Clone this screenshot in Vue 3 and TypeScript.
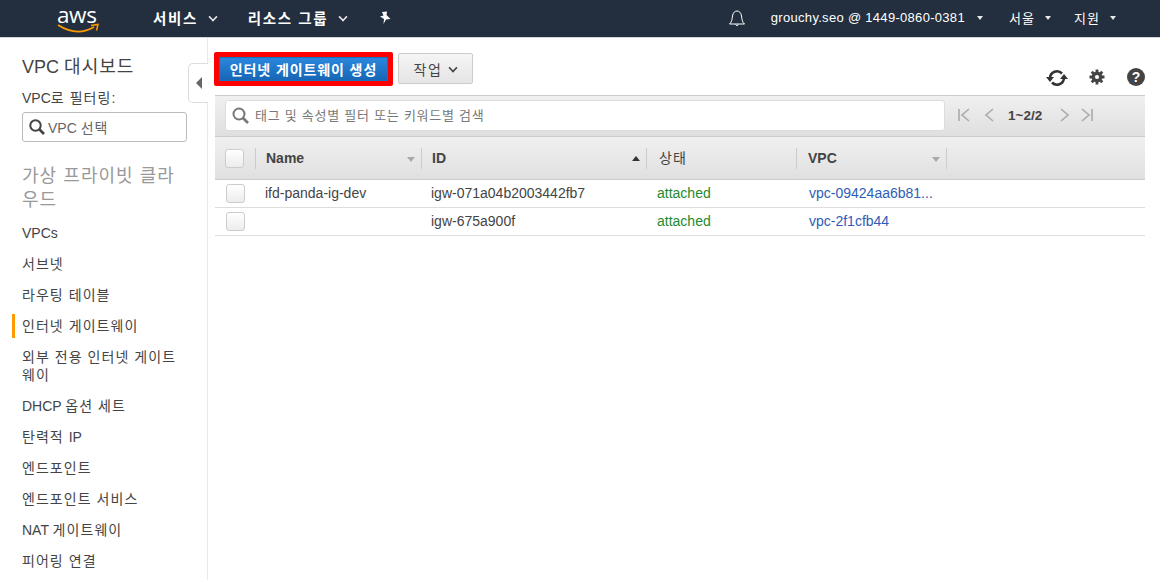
<script setup lang="ts">
const parts = (s: string): { t: string; ko: boolean }[] =>
  s.split(/([가-힣][가-힣 ]*)/).filter(Boolean).map(t => ({ t, ko: /[가-힣]/.test(t) }));
const side: string[] = ['VPCs','서브넷','라우팅 테이블','인터넷 게이트웨이','외부 전용 인터넷 게이트\n웨이','DHCP 옵션 세트','탄력적 IP','엔드포인트','엔드포인트 서비스','NAT 게이트웨이','피어링 연결'];
const rows = [
 {n:'ifd-panda-ig-dev',id:'igw-071a04b2003442fb7',vpc:'vpc-09424aa6b81...'},
 {n:'',id:'igw-675a900f',vpc:'vpc-2f1cfb44'}
];
</script>
<template>
<div class="page">
  <header class="top">
    <div class="logo">
      <span class="awst">aws</span>
      <svg class="swoosh" width="44" height="12" viewBox="0 0 44 12">
        <path d="M1 2 Q20 14 37 4" fill="none" stroke="#f90" stroke-width="1.8"/>
        <path d="M34 2.5 L41 1.5 L39.5 7.5" fill="none" stroke="#f90" stroke-width="1.5"/>
      </svg>
    </div>
    <span class="nav n1">서비스</span><i class="chev big"></i>
    <span class="nav n2">리소스 그룹</span><i class="chev big"></i>
    <svg class="pin" width="14" height="14" viewBox="0 0 14 14"><path d="M4 1 L9 0.5 L8.5 4 L12.5 8 L8 8.5 L5.5 13 L6 8 L2 5.5 L5.5 4.5Z" fill="#fff"/></svg>
    <span class="grow"></span>
    <svg class="bell" width="18" height="18" viewBox="0 0 18 18"><path d="M1.5 15 C4 13 4 10 4.5 7 C5 3.5 7 2 9 2 C11 2 13 3.5 13.5 7 C14 10 14 13 16.5 15Z M7.5 15.5 Q9 18 10.5 15.5" fill="none" stroke="#fff" stroke-width="1"/></svg>
    <span class="r r1">grouchy.seo @ 1449-0860-0381</span><i class="tri"></i>
    <span class="r r2 ko">서울</span><i class="tri"></i>
    <span class="r r3 ko">지원</span><i class="tri"></i>
  </header>
  <div class="body">
    <aside class="side">
      <h2>VPC <span class="ko">대시보드</span></h2>
      <div class="flabel">VPC<span class="ko">로 필터링</span>:</div>
      <div class="vsel">
        <svg width="18" height="18" viewBox="0 0 18 18"><circle cx="7.5" cy="7.5" r="5.2" fill="none" stroke="#444" stroke-width="2"/><path d="M11.5 11.5 L16 16" stroke="#444" stroke-width="2.6"/></svg>
        <span>VPC <span class="ko">선택</span></span>
      </div>
      <h3 class="ko">가상 프라이빗 클라<br>우드</h3>
      <ul>
        <li v-for="(s,i) in side" :key="s" :class="{on:i===3}"><span v-for="(p,j) in parts(s)" :key="j" :class="{ko:p.ko}">{{ p.t }}</span></li>
      </ul>
    </aside>
    <main class="main">
      <div class="collapse"><i></i></div>
      <div class="toolbar">
        <div class="redbox"><button class="primary ko">인터넷 게이트웨이 생성</button></div>
        <button class="act"><span class="ko">작업</span><i class="chev dark"></i></button>
        <span class="grow"></span>
        <svg class="ti" width="22" height="18" viewBox="0 0 22 18"><path d="M4 9 A7 7 0 0 1 16 4.5" fill="none" stroke="#333" stroke-width="2.6"/><path d="M18 9 A7 7 0 0 1 6 13.5" fill="none" stroke="#333" stroke-width="2.6"/><path d="M0 8 L8 8 L4 13Z M14 10 L22 10 L18 5Z" fill="#333"/></svg>
        <svg class="ti t2" width="16" height="16" viewBox="0 0 16 16"><path d="M8 0.5V15.5M0.5 8H15.5M2.7 2.7L13.3 13.3M13.3 2.7L2.7 13.3" stroke="#444" stroke-width="2.8"/><circle cx="8" cy="8" r="5.4" fill="#444"/><circle cx="8" cy="8" r="2.1" fill="#fff"/></svg>
        <span class="help">?</span>
      </div>
      <div class="filterbar">
        <div class="search">
          <svg width="20" height="20" viewBox="0 0 20 20"><circle cx="8" cy="8" r="5.5" fill="none" stroke="#777" stroke-width="2"/><path d="M12 12 L17 17" stroke="#777" stroke-width="2.6"/></svg>
          <span class="ph">태그 및 속성별 필터 또는 키워드별 검색</span>
        </div>
        <div class="pager">
          <svg width="12" height="14" viewBox="0 0 12 14"><path d="M1 1V13M11 1L4 7L11 13" fill="none" stroke="#aaa" stroke-width="1.6"/></svg>
          <svg class="p2" width="10" height="14" viewBox="0 0 10 14"><path d="M9 1L2 7L9 13" fill="none" stroke="#aaa" stroke-width="1.6"/></svg>
          <b>1~2/2</b>
          <svg width="10" height="14" viewBox="0 0 10 14"><path d="M1 1L8 7L1 13" fill="none" stroke="#aaa" stroke-width="1.6"/></svg>
          <svg class="p3" width="12" height="14" viewBox="0 0 12 14"><path d="M11 1V13M1 1L8 7L1 13" fill="none" stroke="#aaa" stroke-width="1.6"/></svg>
        </div>
      </div>
      <div class="grid thead">
        <div class="c0"><span class="cb"></span></div>
        <div class="th c1">Name<i class="sort"></i></div>
        <div class="th c2">ID<i class="sort up"></i></div>
        <div class="th c3 kr ko">상태</div>
        <div class="th c4">VPC<i class="sort"></i></div>
      </div>
      <div v-for="r in rows" :key="r.id" class="grid row">
        <div class="c0"><span class="cb"></span></div>
        <div class="td c1">{{ r.n }}</div>
        <div class="td c2">{{ r.id }}</div>
        <div class="td c3 green">attached</div>
        <div class="td c4 blue">{{ r.vpc }}</div>
      </div>
    </main>
  </div>
</div>
</template>
<style>
html,body{margin:0;padding:0;overflow:hidden;background:#fff}
</style>
<style scoped>
.page{width:1160px;height:580px;overflow:hidden;font-family:"Liberation Sans","Noto Sans CJK KR",sans-serif;color:#444;font-size:14px}
.ko{letter-spacing:1.05px}
.top{height:35px;padding-bottom:2px;background:#232f3e;border-bottom:1px solid #d5d5d5;display:flex;align-items:center;color:#fff;box-sizing:content-box}
.logo{margin-left:57px;width:44px;height:30px;position:relative;flex:none}
.awst{position:absolute;left:0;top:-3px;font:500 22.5px/30px "Open Sans",sans-serif;color:#fff;letter-spacing:-.4px}
.swoosh{position:absolute;left:0;top:20px}
.nav{font-size:14.5px;font-weight:700;letter-spacing:1.6px}
.n1{margin-left:52px}
.n2{margin-left:31px}
.chev{display:inline-block;width:6px;height:6px;border-right:2px solid #e8e8e8;border-bottom:2px solid #e8e8e8;transform:rotate(45deg) scale(.8)}
.chev.big{margin:-2px 0 0 11px}
.pin{margin-left:31px}
.grow{flex:1}
.bell{margin-right:25px}
.r{font-size:13px}
.r1{letter-spacing:.3px}
.r2{margin-left:26px}
.r3{margin-left:23px}
.tri{width:0;height:0;border-left:3.5px solid transparent;border-right:3.5px solid transparent;border-top:4px solid #e8e8e8;margin-left:10px}
.r1+.tri{margin-left:12px}
.tri:last-child{margin-right:44px}
.body{display:flex;height:542px}
.side{flex:none;border-right:1px solid #eaeaea;box-sizing:content-box;padding-left:22px;width:185px}
h2{margin:17px 0 0;font-weight:400;font-size:18px;line-height:24px;color:#444}
.flabel{margin-top:10px;font-size:14px;line-height:18px;color:#444}
.vsel{margin-top:5px;width:163px;height:28px;border:1px solid #bbb;border-radius:3px;display:flex;align-items:center;color:#666;font-size:14px}
.vsel svg{margin-left:5px;margin-right:2px;flex:none}
h3{margin:22px 0 0;font-weight:400;font-size:18px;line-height:24px;color:#999;width:175px;letter-spacing:1.1px}
ul{list-style:none;margin:5px 0 0 -10px;padding:0}
li{white-space:pre-line;padding:6.5px 0 6.5px 10px;line-height:18px;font-size:14px;color:#444;width:175px;position:relative}
li.on::before{content:"";position:absolute;left:0;top:4px;bottom:3px;width:3px;background:#f90}
.main{flex:1;position:relative;padding:0 15px 0 7px;min-width:0}
.collapse{position:absolute;left:-20px;top:25px;width:19px;height:38px;border:1px solid #ddd;border-right:0;border-radius:5px 0 0 5px;background:#fff;display:flex;align-items:center;justify-content:center}
.collapse i{border-top:6px solid transparent;border-bottom:6px solid transparent;border-right:6px solid #666}
.toolbar{display:flex;height:57px;align-items:flex-start;padding-top:14px;box-sizing:border-box}
.redbox{border:5px solid #f00;border-radius:2px;margin-left:-1px;height:24px}
button{font-family:inherit;font-size:14px;cursor:pointer}
.primary{height:24px;width:169px;padding:0;border:1px solid #1a6fc0;background:linear-gradient(#2a87de,#1766b5);color:#fff;font-weight:700;display:block;letter-spacing:.9px}
.act{margin-left:5px;margin-top:1px;width:75px;height:31px;border:1px solid #ccc;border-radius:2px;background:linear-gradient(#f5f5f5,#e5e5e5);color:#444;padding:0}
.act .ko{letter-spacing:1.6px}
.chev.dark{border-color:#444;margin-left:7px;margin-bottom:3px;width:6px;height:6px}
.ti{margin-top:17px}
.t2{margin-left:21px;margin-top:17px}
.help{margin-left:22px;margin-top:16px;width:18px;height:18px;border-radius:50%;background:#444;color:#fff;font-size:14px;font-weight:700;text-align:center;line-height:18px}
.filterbar{height:42px;background:linear-gradient(#f0f0f0,#dfdfdf);border-top:1px solid #ccc;border-bottom:1px solid #ccc;box-sizing:border-box;display:flex;align-items:flex-start;padding:4px 0 0 10px}
.search{width:720px;height:31px;box-sizing:border-box;background:#fff;border:1px solid #ddd;border-radius:3px;display:flex;align-items:center;color:#777;font-size:13px}
.search svg{margin:1px 4px 0 5px}
.ph{letter-spacing:.75px;padding-bottom:2px}
.pager{display:flex;align-items:center;margin-left:13px;height:30px;color:#444}
.pager .p2{margin-left:14px}
.pager .p3{margin-left:11px}
.pager b{font-size:13.5px;margin:0 18px 0 14px;font-weight:700}
.grid{display:grid;grid-template-columns:40px 166px 225px 150px 151px;box-sizing:border-box}
.thead{height:43px;background:linear-gradient(#f0f0f0,#e0e0e0);border-bottom:1px solid #ccc;align-items:center}
.c0{padding-left:11px;display:flex;align-items:center}
.thead .c0{padding-left:10px}
.cb{width:17px;height:17px;border:1px solid #ccc;border-radius:3px;background:linear-gradient(#fff,#ececec);display:block}
.th{height:21px;line-height:21px;font-weight:700;font-size:14px;color:#444;border-left:1px solid #ccc;padding-left:10px;position:relative;box-sizing:border-box}
.th.c4{border-right:1px solid #ccc;padding-left:11px}
.th.kr{font-weight:400;padding-left:12px}
.sort{position:absolute;right:6px;top:9px;border-left:4px solid transparent;border-right:4px solid transparent;border-top:5px solid #aaa}
.sort.up{border-top:0;border-bottom:5px solid #333;top:8px}
.row{height:28px;border-bottom:1px solid #ddd;align-items:center;font-size:14px;color:#444}
.td{padding-left:10px;line-height:20px;box-sizing:border-box;margin-top:-2px}
.td.c2{padding-left:10px}
.td.c3{padding-left:11px}
.td.c4{padding-left:13px}
.green{color:#1e8a2e}
.blue{color:#2d5db5}
</style>
